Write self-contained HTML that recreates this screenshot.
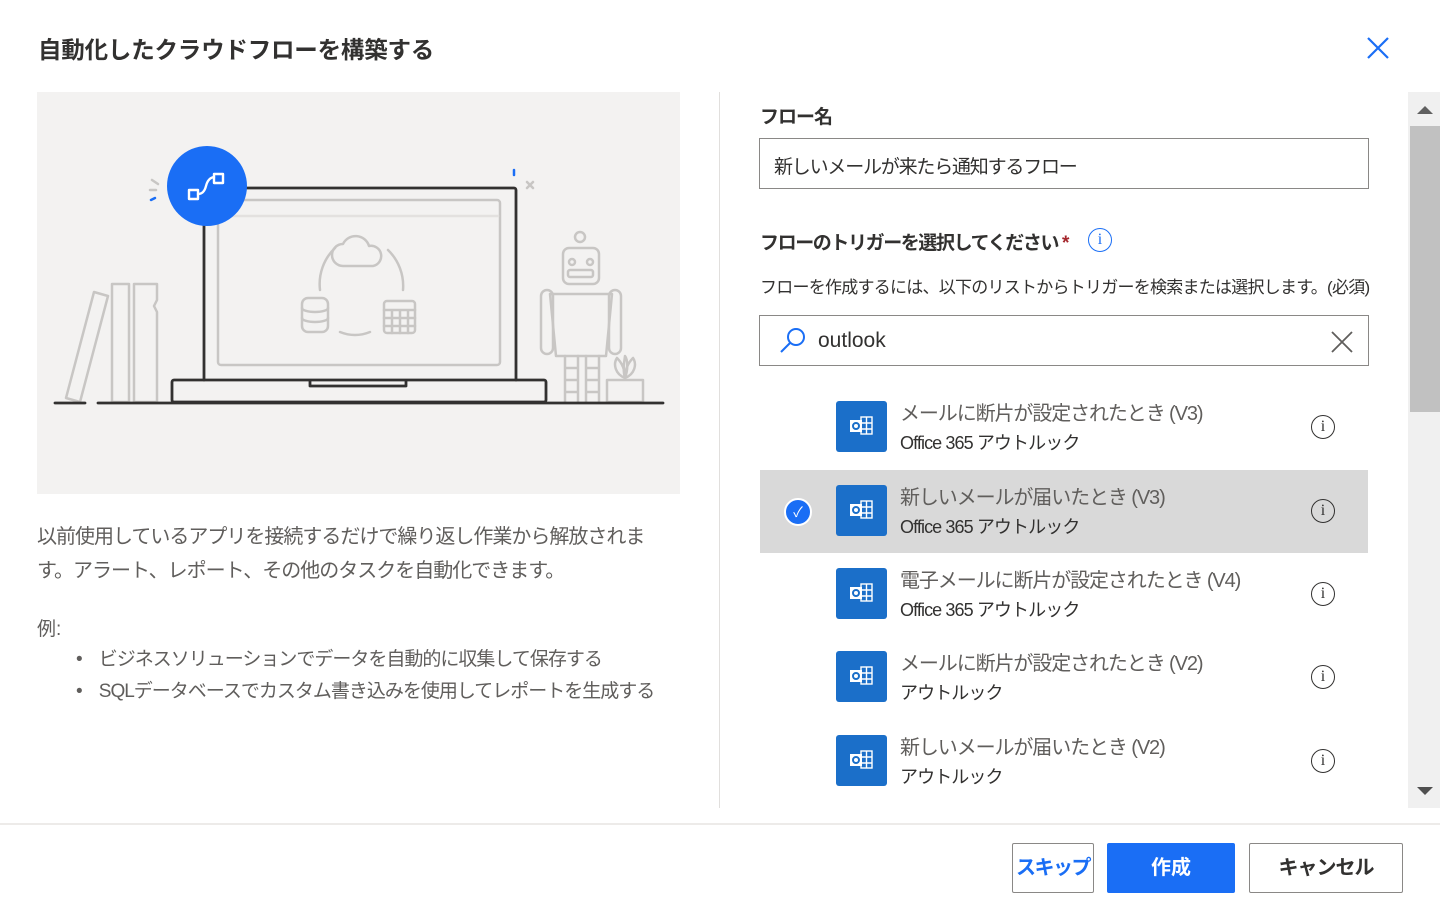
<!DOCTYPE html>
<html><head><meta charset="utf-8"><style>
*{margin:0;padding:0;box-sizing:border-box}
body{width:1440px;height:906px;background:#fff;position:relative;overflow:hidden;font-family:"Liberation Sans","Noto Sans CJK JP",sans-serif;color:#323130}
.a{position:absolute;white-space:nowrap}
.row{position:absolute;left:760px;width:608px;height:83px}
.ic{position:absolute;left:76px;top:15px;width:51px;height:51px;background:#1b6fc9;border-radius:3px}
.t1{position:absolute;left:140px;top:11px;font-size:20px;letter-spacing:-1.1px;color:#605e5c}
.t2{position:absolute;left:140px;top:43px;font-size:18px;letter-spacing:-0.9px;color:#323130}
.inf{position:absolute;left:551px;top:29px;width:24px;height:24px;border:1.6px solid #323130;border-radius:50%;font-size:16px;text-align:center;line-height:21px;font-family:"Liberation Serif",serif}
</style></head><body>
<div class="a" style="left:38px;top:31px;font-size:23.5px;font-weight:bold;color:#323130;letter-spacing:-0.2px">自動化したクラウドフローを構築する</div>
<svg class="a" style="left:1366px;top:36px" width="24" height="24"><path d="M2 2L22 22M22 2L2 22" stroke="#1a6ef5" stroke-width="2.2"/></svg>

<div class="a" style="left:37px;top:92px;width:643px;height:402px;background:#f3f2f1"></div>
<svg class="a" style="left:0;top:0" width="700" height="500" fill="none" stroke-linecap="round" stroke-linejoin="round">
<g stroke="#c8c6c4" stroke-width="2.5">
<path d="M66 398L94 292L108 296L80 402Z"/><rect x="112" y="284" width="17" height="118"/><path d="M134 284H157V300L154 306L157 312V402H134Z"/>
<rect x="218" y="200" width="282" height="165" rx="3"/><line x1="220" y1="216" x2="498" y2="216" stroke="#e3e1df"/>
<path d="M343 266h30a10 10 0 0 0-4-20a14 14 0 0 0-26-2a10 10 0 0 0 0 22z"/>
<path d="M320 290a50 50 0 0 1 15-42M388 250a50 50 0 0 1 15 40M340 332a40 40 0 0 0 30 0"/>
<rect x="302" y="298" width="26" height="34" rx="6"/><path d="M302 308a13 4 0 0 0 26 0M302 318a13 4 0 0 0 26 0"/>
<rect x="384" y="301" width="31" height="32" rx="3"/><path d="M384 310h31M392 310v23M400 310v23M408 310v23M384 318h31M384 326h31"/>
<circle cx="580" cy="237" r="5"/><rect x="563" y="248" width="36" height="36" rx="6"/><circle cx="572" cy="262" r="3"/><circle cx="590" cy="262" r="3"/><rect x="568" y="270" width="25" height="7" rx="2"/>
<path d="M550 294h62l-6 62h-50z"/><rect x="541" y="290" width="12" height="64" rx="6"/><rect x="609" y="290" width="12" height="64" rx="6"/>
<path d="M565 356v46M578 356v46M586 356v46M599 356v46M565 368h13M565 380h13M565 392h13M586 368h13M586 380h13M586 392h13"/>
<rect x="607" y="380" width="36" height="22"/><path d="M625 378c-10-4-12-14-8-20c4 4 8 10 8 20zM625 378c10-4 12-14 8-20c-4 4-8 10-8 20zM625 378c-3-10 0-20 0-22c3 4 3 14 0 22z"/>
<path d="M527 182l6 6M533 182l-6 6M152 180l6 4M150 190h6"/>
</g>
<g stroke="#323130" stroke-width="2.8">
<path d="M204 380V188H514a2 2 0 0 1 2 2V380"/><rect x="172" y="380" width="374" height="22" rx="2"/><path d="M310 381v5h96v-5"/>
<path d="M55 403h30M98 403h565"/>
</g>
<path d="M155 198l-4 2M514 170v5" stroke="#1a6ef5" stroke-width="2.5"/>
<circle cx="207" cy="186" r="40" fill="#1a6ef5"/>
<g stroke="#fff" stroke-width="2.4"><rect x="189" y="190" width="9" height="9"/><rect x="214" y="174" width="9" height="9"/><path d="M198 194q6 0 8-8t8-9"/></g>
</svg>

<div class="a" style="left:37px;top:520px;font-size:20px;letter-spacing:-1px;color:#605e5c;line-height:34px;white-space:normal;width:625px">以前使用しているアプリを接続するだけで繰り返し作業から解放されます。アラート、レポート、その他のタスクを自動化できます。</div>
<div class="a" style="left:37px;top:614px;font-size:19px;color:#605e5c">例:</div>
<div class="a" style="left:76px;top:644px;font-size:19px;letter-spacing:-1px;color:#605e5c;line-height:32px">•&nbsp;&nbsp;&nbsp;&nbsp;ビジネスソリューションでデータを自動的に収集して保存する<br>•&nbsp;&nbsp;&nbsp;&nbsp;SQLデータベースでカスタム書き込みを使用してレポートを生成する</div>

<div class="a" style="left:719px;top:92px;width:1px;height:716px;background:#e1dfdd"></div>
<div class="a" style="left:0;top:823px;width:1440px;height:2px;background:#edebe9"></div>

<div class="a" style="left:760px;top:102px;font-size:19px;letter-spacing:-1px;font-weight:bold">フロー名</div>
<div class="a" style="left:759px;top:138px;width:610px;height:51px;border:1px solid #8a8886;padding:13px 14px;font-size:19px;letter-spacing:-1.2px;color:#323130">新しいメールが来たら通知するフロー</div>
<div class="a" style="left:760px;top:228px;font-size:19px;letter-spacing:-1.4px;font-weight:bold">フローのトリガーを選択してください <span style="color:#a4262c">*</span></div>
<div class="a" style="left:1088px;top:228px;width:24px;height:24px;border:1.8px solid #1a6ef5;border-radius:50%;color:#1a6ef5;font-size:16px;text-align:center;line-height:21px;font-family:'Liberation Serif',serif">i</div>
<div class="a" style="left:760px;top:273px;font-size:17px;letter-spacing:-0.75px;color:#323130">フローを作成するには、以下のリストからトリガーを検索または選択します。(必須)</div>
<div class="a" style="left:759px;top:315px;width:610px;height:51px;border:1px solid #8a8886"></div>
<svg class="a" style="left:779px;top:327px" width="28" height="28" fill="none" stroke="#1a6ef5" stroke-width="2"><circle cx="17" cy="10" r="8"/><path d="M11 16L2 25"/></svg>
<div class="a" style="left:818px;top:329px;font-size:21px;color:#323130">outlook</div>
<svg class="a" style="left:1331px;top:331px" width="22" height="22"><path d="M1 1L21 21M21 1L1 21" stroke="#605e5c" stroke-width="1.8"/></svg>

<div class="row" style="top:386px"><div class="ic"></div><div class="t1">メールに断片が設定されたとき (V3)</div><div class="t2">Office 365 アウトルック</div><div class="inf">i</div></div>
<div class="row" style="top:470px;background:#d9d9d9"><div style="position:absolute;left:24px;top:28px;width:28px;height:28px;border-radius:50%;background:#1a6ef5;border:2px solid #fff;color:#fff;font-size:14px;text-align:center;line-height:25px">✓</div><div class="ic"></div><div class="t1">新しいメールが届いたとき (V3)</div><div class="t2">Office 365 アウトルック</div><div class="inf">i</div></div>
<div class="row" style="top:553px"><div class="ic"></div><div class="t1">電子メールに断片が設定されたとき (V4)</div><div class="t2">Office 365 アウトルック</div><div class="inf">i</div></div>
<div class="row" style="top:636px"><div class="ic"></div><div class="t1">メールに断片が設定されたとき (V2)</div><div class="t2">アウトルック</div><div class="inf">i</div></div>
<div class="row" style="top:720px"><div class="ic"></div><div class="t1">新しいメールが届いたとき (V2)</div><div class="t2">アウトルック</div><div class="inf">i</div></div>
<svg class="a" style="left:836px;top:0" width="52" height="906" fill="none" stroke="#fff" stroke-width="1.4">
<defs><g id="o"><rect x="25" y="31" width="11" height="17"/><path d="M25 37h11M25 43h11M30.5 31v17"/><rect x="14" y="34" width="12" height="12" fill="#fff" stroke="none"/><circle cx="20" cy="40" r="3" stroke="#1b6fc9" stroke-width="2"/></g></defs>
<use href="#o" y="386"/><use href="#o" y="470"/><use href="#o" y="553"/><use href="#o" y="636"/><use href="#o" y="720"/>
</svg>

<div class="a" style="left:1408px;top:92px;width:32px;height:716px;background:#f0f0f0"></div>
<div class="a" style="left:1410px;top:126px;width:30px;height:286px;background:#c1c1c1"></div>
<svg class="a" style="left:1416px;top:104px" width="18" height="12"><path d="M1 10L9 2L17 10Z" fill="#606060"/></svg>
<svg class="a" style="left:1416px;top:785px" width="18" height="12"><path d="M1 2L9 10L17 2Z" fill="#505050"/></svg>

<div class="a" style="left:1012px;top:843px;width:82px;height:50px;border:1px solid #8a8886;border-radius:2px;color:#1a6ef5;font-size:20px;letter-spacing:-1.5px;font-weight:bold;text-align:center;line-height:48px">スキップ</div>
<div class="a" style="left:1107px;top:843px;width:128px;height:50px;background:#1a6ef5;border-radius:2px;color:#fff;font-size:20px;font-weight:bold;text-align:center;line-height:50px">作成</div>
<div class="a" style="left:1249px;top:843px;width:154px;height:50px;border:1px solid #8a8886;border-radius:2px;color:#323130;font-size:20px;letter-spacing:-1px;font-weight:bold;text-align:center;line-height:48px">キャンセル</div>
</body></html>
